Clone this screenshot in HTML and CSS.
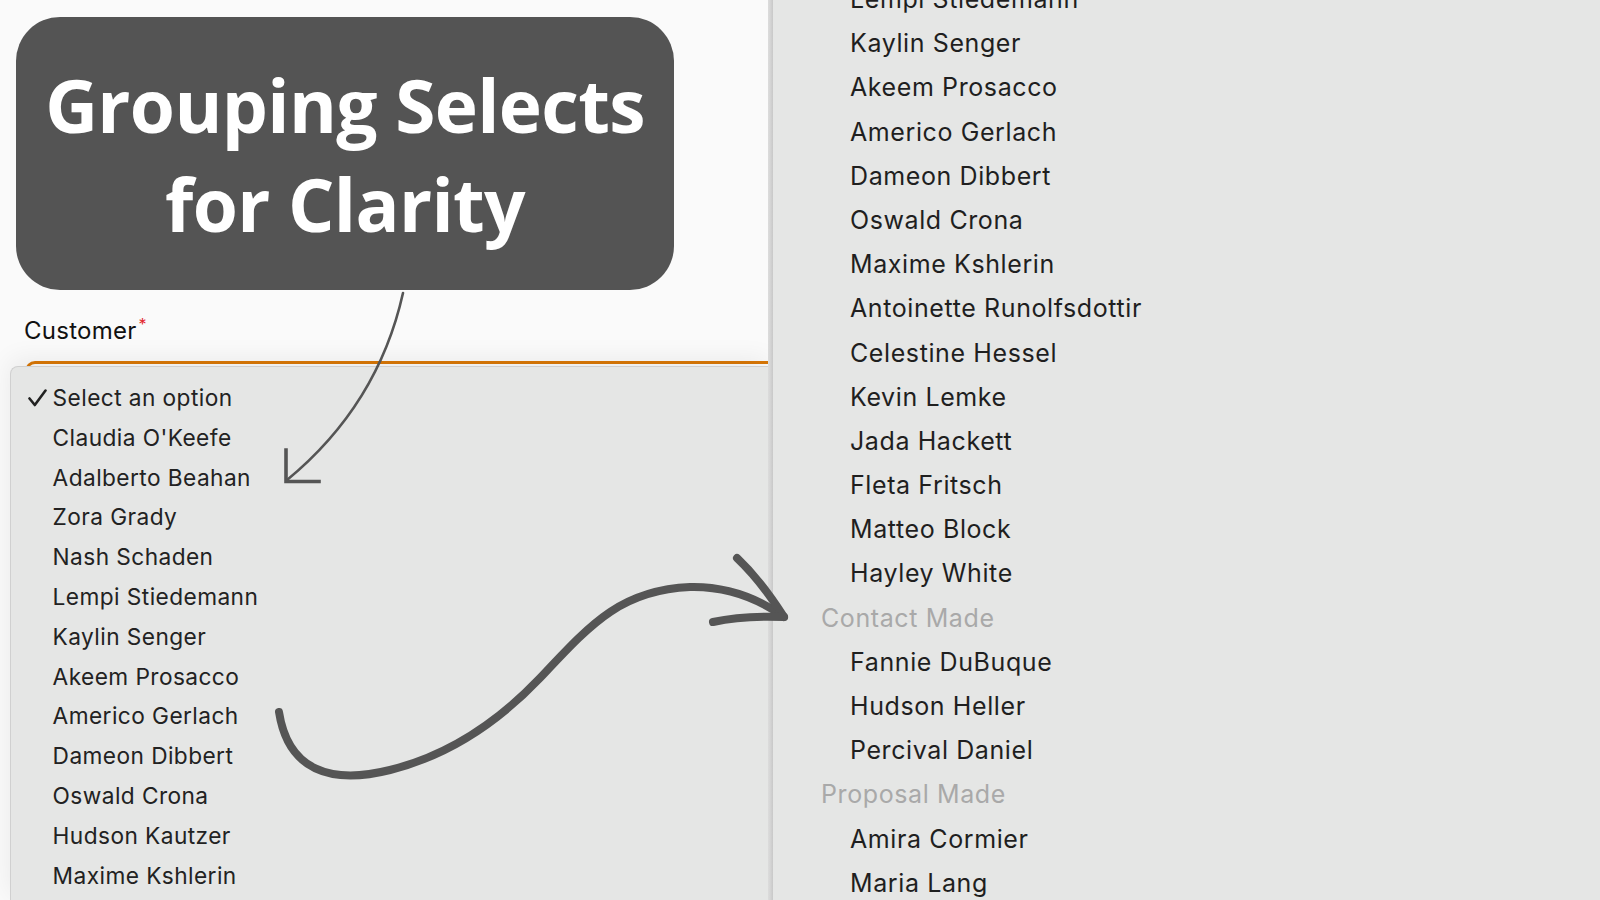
FILE: index.html
```html
<!DOCTYPE html>
<html lang="en">
<head>
<meta charset="utf-8">
<title>Grouping Selects for Clarity</title>
<link rel="stylesheet" href="styles.css">
</head>
<body>
<div class="page">
  <section class="form-pane">
    <div class="title-card">
      <h1>Grouping Selects<br>for Clarity</h1>
    </div>
    <label class="field-label">Customer<span class="req">*</span></label>
    <div class="select-field"></div>
    <ul class="menu">
      <li class="opt selected"><svg class="check" width="19" height="18" viewBox="0 0 19 18"><path d="M1.5 9.5 L6.8 16 L17.5 1.5" /></svg>Select an option</li>
      <li class="opt">Claudia O'Keefe</li>
      <li class="opt">Adalberto Beahan</li>
      <li class="opt">Zora Grady</li>
      <li class="opt">Nash Schaden</li>
      <li class="opt">Lempi Stiedemann</li>
      <li class="opt">Kaylin Senger</li>
      <li class="opt">Akeem Prosacco</li>
      <li class="opt">Americo Gerlach</li>
      <li class="opt">Dameon Dibbert</li>
      <li class="opt">Oswald Crona</li>
      <li class="opt">Hudson Kautzer</li>
      <li class="opt">Maxime Kshlerin</li>
    </ul>
  </section>
  <div class="divider"></div>
  <section class="list-pane">
    <ul class="grouped">
      <li class="opt">Lempi Stiedemann</li>
      <li class="opt">Kaylin Senger</li>
      <li class="opt">Akeem Prosacco</li>
      <li class="opt">Americo Gerlach</li>
      <li class="opt">Dameon Dibbert</li>
      <li class="opt">Oswald Crona</li>
      <li class="opt">Maxime Kshlerin</li>
      <li class="opt">Antoinette Runolfsdottir</li>
      <li class="opt">Celestine Hessel</li>
      <li class="opt">Kevin Lemke</li>
      <li class="opt">Jada Hackett</li>
      <li class="opt">Fleta Fritsch</li>
      <li class="opt">Matteo Block</li>
      <li class="opt">Hayley White</li>
      <li class="group">Contact Made</li>
      <li class="opt">Fannie DuBuque</li>
      <li class="opt">Hudson Heller</li>
      <li class="opt">Percival Daniel</li>
      <li class="group">Proposal Made</li>
      <li class="opt">Amira Cormier</li>
      <li class="opt">Maria Lang</li>
    </ul>
  </section>
  <svg class="annotations" width="1600" height="900" viewBox="0 0 1600 900">
    <path class="thin" d="M403 293 Q378 405 287 480" />
    <path class="thin-head" d="M286 450 L286 481.5 L319 481.5" />
    <path class="thick" d="M279 712 C288 770 330 785 390 770 C450 755 500 720 540 678 C590 625 620 590 690 587 C730 586 760 600 783 616" />
    <path class="thick" d="M737 558 C755 575 770 595 784 617" />
    <path class="thick" d="M713 622 C735 617 760 616 784 617" />
  </svg>
</div>
</body>
</html>
```
FILE: styles.css
```css
* {
  box-sizing: border-box;
  margin: 0;
  padding: 0;
}

html,
body {
  width: 1600px;
  height: 900px;
  overflow: hidden;
}

body {
  font-family: Inter, "Liberation Sans", sans-serif;
  background: #e5e6e5;
}

.page {
  position: relative;
  display: flex;
  width: 1600px;
  height: 900px;
  overflow: hidden;
}

/* ---------- left pane: form with open native select ---------- */
.form-pane {
  width: 768px;
  flex: none;
  display: flex;
  flex-direction: column;
  background: #fafafa;
  overflow: hidden;
}

.title-card {
  flex: none;
  width: 658px;
  height: 273px;
  margin: 17px 0 0 16px;
  border-radius: 44px;
  background: #545454;
  display: flex;
  align-items: center;
  justify-content: center;
}

.title-card h1 {
  font-family: "Open Sans", "Noto Sans", sans-serif;
  font-weight: 700;
  font-size: 73px;
  line-height: 99px;
  letter-spacing: -0.65px;
  color: #ffffff;
  text-align: center;
  white-space: nowrap;
}

.field-label {
  flex: none;
  margin: 26px 0 0 24px;
  font-size: 24px;
  line-height: 30px;
  letter-spacing: 0.25px;
  color: #111111;
}

.req {
  margin-left: 2px;
  font-size: 16px;
  line-height: 16px;
  vertical-align: top;
  color: #e3262d;
}

.select-field {
  flex: none;
  width: 900px;
  height: 12px;
  margin: 15px 0 0 25px;
  border-top: 3px solid #d97706;
  border-left: 3px solid #d97706;
  border-top-left-radius: 10px;
}

.menu {
  position: relative;
  flex: 1;
  margin: -7px 0 0 10px;
  padding-top: 11px;
  list-style: none;
  background: #e5e6e5;
  border-top: 1px solid #d0d0d0;
  border-left: 1px solid #d0d0d0;
  border-top-left-radius: 8px;
  box-shadow: 0 -6px 26px rgba(0, 0, 0, 0.07);
}

.menu li {
  display: flex;
  align-items: center;
  height: 39.8px;
  padding-left: 41.6px;
  font-size: 22.7px;
  line-height: 39.8px;
  letter-spacing: 0.42px;
  color: #222222;
  white-space: nowrap;
}

.menu li.selected {
  padding-left: 17px;
}

.check {
  flex: none;
  margin-right: 5.6px;
}

.check path {
  fill: none;
  stroke: #222222;
  stroke-width: 2.6;
  stroke-linecap: round;
  stroke-linejoin: round;
}

/* ---------- divider between the two shots ---------- */
.divider {
  width: 5px;
  flex: none;
  background: linear-gradient(to right, #dcdcdc, #d4d4d4 50%, #c8c8c8);
}

/* ---------- right pane: grouped list ---------- */
.list-pane {
  flex: 1;
  background: #e5e6e5;
  overflow: hidden;
}

.grouped {
  list-style: none;
  margin-top: -23px;
}

.grouped li {
  height: 44.2px;
  padding-left: 77px;
  font-size: 25px;
  line-height: 44.2px;
  letter-spacing: 0.6px;
  color: #1f1f1f;
  white-space: nowrap;
}

.grouped li.group {
  padding-left: 48px;
  color: #a9a9a9;
}

/* ---------- hand-drawn arrows overlay ---------- */
.annotations {
  position: absolute;
  left: 0;
  top: 0;
  pointer-events: none;
}

.annotations path {
  fill: none;
  stroke: #555555;
}

.annotations .thin {
  stroke-width: 2.6;
  stroke-linecap: round;
}

.annotations .thin-head {
  stroke-width: 3.6;
  stroke-linecap: square;
  stroke-linejoin: miter;
}

.annotations .thick {
  stroke-width: 8;
  stroke-linecap: round;
  stroke-linejoin: round;
}
```
